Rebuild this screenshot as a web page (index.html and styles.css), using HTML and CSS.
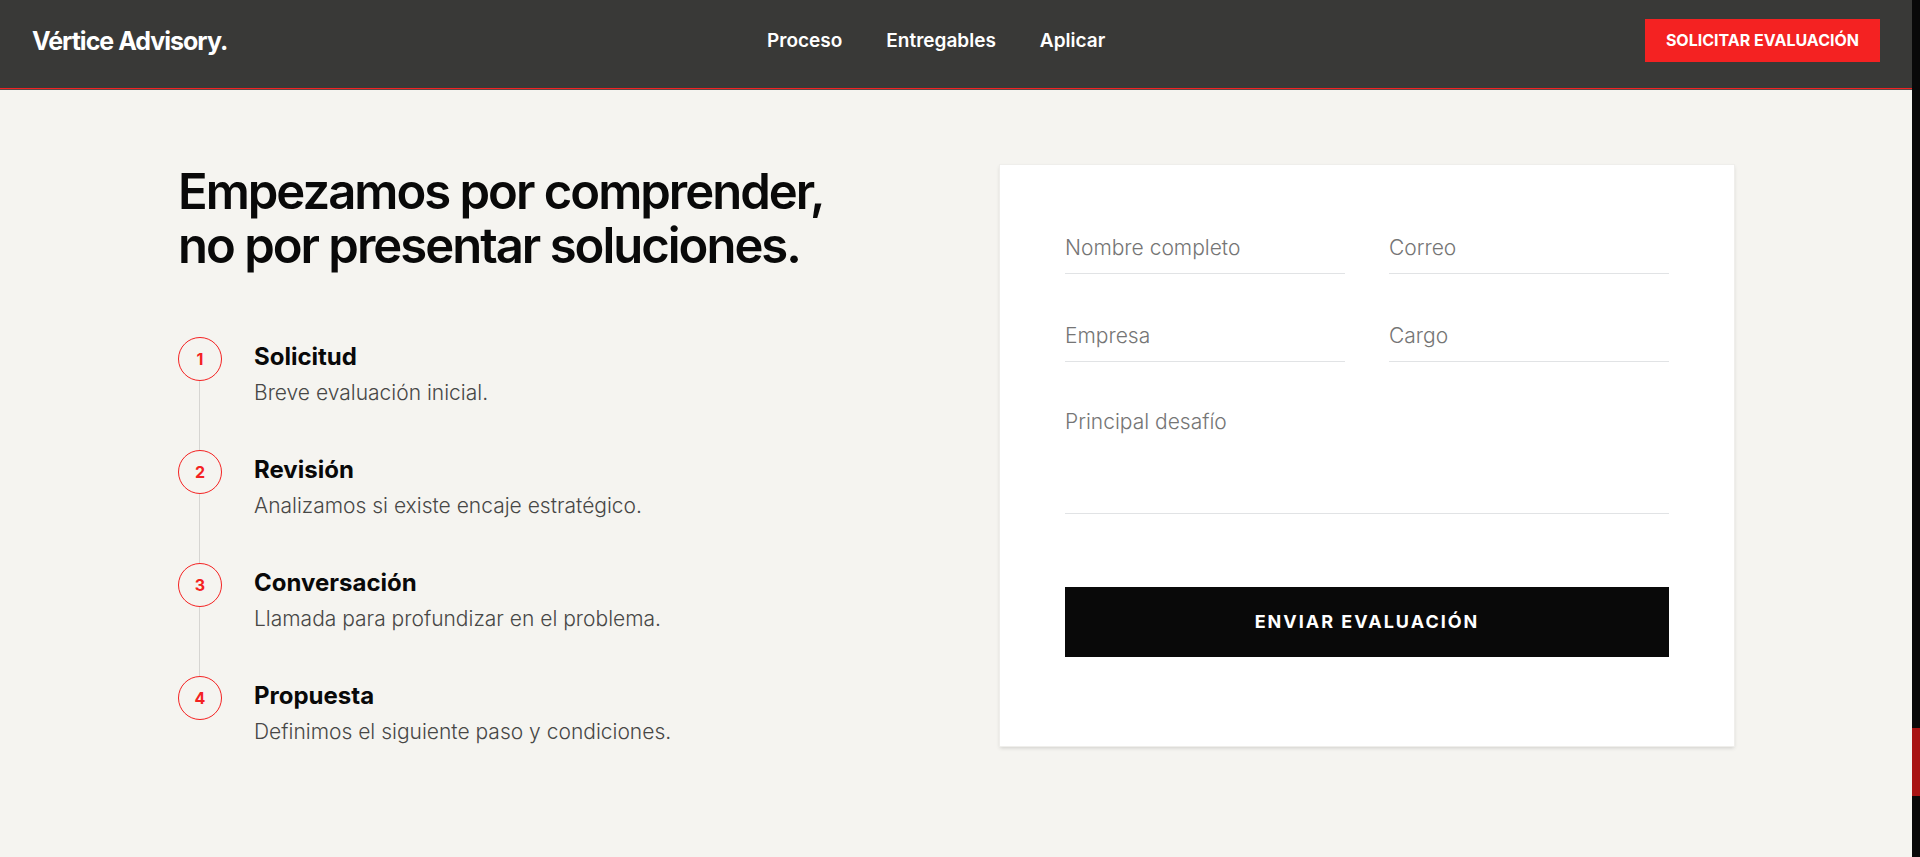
FILE: index.html
```html
<!DOCTYPE html>
<html lang="es">
<head>
<meta charset="utf-8">
<meta name="viewport" content="width=device-width, initial-scale=1">
<title>Vértice Advisory</title>
<link rel="stylesheet" href="styles.css">
</head>
<body class="shell">
<div class="page">
  <header class="header">
    <a class="brand" href="#inicio">Vértice Advisory.</a>
    <nav class="nav" aria-label="Principal">
      <a class="nav-link" href="#proceso">Proceso</a>
      <a class="nav-link" href="#entregables">Entregables</a>
      <a class="nav-link" href="#aplicar">Aplicar</a>
    </nav>
    <a class="cta" href="#aplicar">SOLICITAR EVALUACIÓN</a>
  </header>
  <main class="apply" id="aplicar">
    <section class="intro">
      <h1 class="title">Empezamos por comprender,<br>no por presentar soluciones.</h1>
      <ol class="steps">
        <li class="step"><span class="step-number">1</span><div class="step-body"><h2 class="step-title">Solicitud</h2><p class="step-text">Breve evaluación inicial.</p></div></li>
        <li class="step"><span class="step-number">2</span><div class="step-body"><h2 class="step-title">Revisión</h2><p class="step-text">Analizamos si existe encaje estratégico.</p></div></li>
        <li class="step"><span class="step-number">3</span><div class="step-body"><h2 class="step-title">Conversación</h2><p class="step-text">Llamada para profundizar en el problema.</p></div></li>
        <li class="step"><span class="step-number">4</span><div class="step-body"><h2 class="step-title">Propuesta</h2><p class="step-text">Definimos el siguiente paso y condiciones.</p></div></li>
      </ol>
    </section>
    <form class="card">
      <div class="fields">
        <input class="field" type="text" name="nombre" aria-label="Nombre completo" placeholder="Nombre completo">
        <input class="field" type="email" name="correo" aria-label="Correo" placeholder="Correo">
        <input class="field" type="text" name="empresa" aria-label="Empresa" placeholder="Empresa">
        <input class="field" type="text" name="cargo" aria-label="Cargo" placeholder="Cargo">
        <textarea class="field field-wide" name="desafio" aria-label="Principal desafío" placeholder="Principal desafío"></textarea>
      </div>
      <button class="submit" type="submit">ENVIAR EVALUACIÓN</button>
    </form>
  </main>
</div>
<div class="rail" aria-hidden="true"><div class="rail-thumb"></div></div>
</body>
</html>
```
FILE: styles.css
```css
* {
  box-sizing: border-box;
}

.shell {
  margin: 0;
  min-height: 100vh;
  display: flex;
  background: #f5f4f0;
  color: #090909;
  font-family: Inter, "Liberation Sans", sans-serif;
}

.page {
  flex: 1;
  min-width: 0;
}

.header {
  display: flex;
  justify-content: space-between;
  align-items: center;
  padding: 19px 32px 26px;
  background: #393937;
  border-bottom: 1px solid #f42222;
  box-shadow: 0 1px 0 #5c4a48;
}

.brand {
  color: #fff;
  font-size: 25px;
  line-height: 32px;
  font-weight: 700;
  letter-spacing: -1px;
  text-decoration: none;
}

.nav {
  display: flex;
  gap: 44px;
}

.nav-link {
  color: #fff;
  font-size: 19px;
  line-height: 24px;
  font-weight: 600;
  text-decoration: none;
}

.cta {
  padding: 10px 21px 11px;
  background: #f42222;
  color: #fff;
  font-size: 16px;
  line-height: 22px;
  font-weight: 700;
  text-decoration: none;
}

.apply {
  display: grid;
  grid-template-columns: 1fr 1fr;
  gap: 88px;
  align-items: start;
  max-width: 1604px;
  margin: 0 auto;
  padding: 76px 24px;
}

.title {
  margin: 0;
  font-size: 49px;
  line-height: 54px;
  font-weight: 600;
  letter-spacing: -2px;
}

.steps {
  margin: 0;
  padding: 64px 0 0;
  list-style: none;
}

.step {
  display: flex;
  gap: 32px;
  min-height: 113px;
  background: linear-gradient(#d6d5d2, #d6d5d2) 21px 44px / 1px 100% no-repeat;
}

.step:last-child {
  min-height: 0;
  background: none;
}

.step-number {
  display: grid;
  place-items: center;
  flex: none;
  width: 44px;
  height: 44px;
  border: 1px solid #f42222;
  border-radius: 50%;
  color: #f42222;
  font-size: 16px;
  line-height: 20px;
  font-weight: 700;
}

.step-body {
  padding-top: 2px;
}

.step-title {
  margin: 0;
  font-size: 24px;
  line-height: 36px;
  font-weight: 700;
}

.step-text {
  margin: 0;
  color: #474746;
  font-size: 21px;
  line-height: 36px;
  font-weight: 300;
}

.card {
  padding: 65px 65px 89px;
  background: #fff;
  box-shadow: 0 0 0 1px #efeeeb, 0 2px 4px rgba(0, 0, 0, 0.16);
}

.fields {
  display: grid;
  grid-template-columns: 1fr 1fr;
  gap: 44px;
}

.field {
  display: block;
  width: 100%;
  min-width: 0;
  height: 44px;
  margin: 0;
  padding: 0 0 9px;
  border: 0;
  border-bottom: 1px solid #e1e3e5;
  border-radius: 0;
  outline: 0;
  background: transparent;
  color: #090909;
  font-family: inherit;
  font-size: 21px;
  line-height: 32px;
  font-weight: 300;
  resize: none;
}

.field::placeholder {
  color: #757575;
  opacity: 1;
}

.field-wide {
  grid-column: 1 / -1;
  height: 108px;
}

.submit {
  width: 100%;
  margin-top: 73px;
  padding: 22px;
  border: 0;
  background: #090909;
  color: #fff;
  font-family: inherit;
  font-size: 18px;
  line-height: 26px;
  font-weight: 700;
  letter-spacing: 2px;
}

.rail {
  flex: none;
  width: 8px;
  padding-top: 728px;
  background: #090909;
}

.rail-thumb {
  height: 68px;
  background: #a81414;
}
```
